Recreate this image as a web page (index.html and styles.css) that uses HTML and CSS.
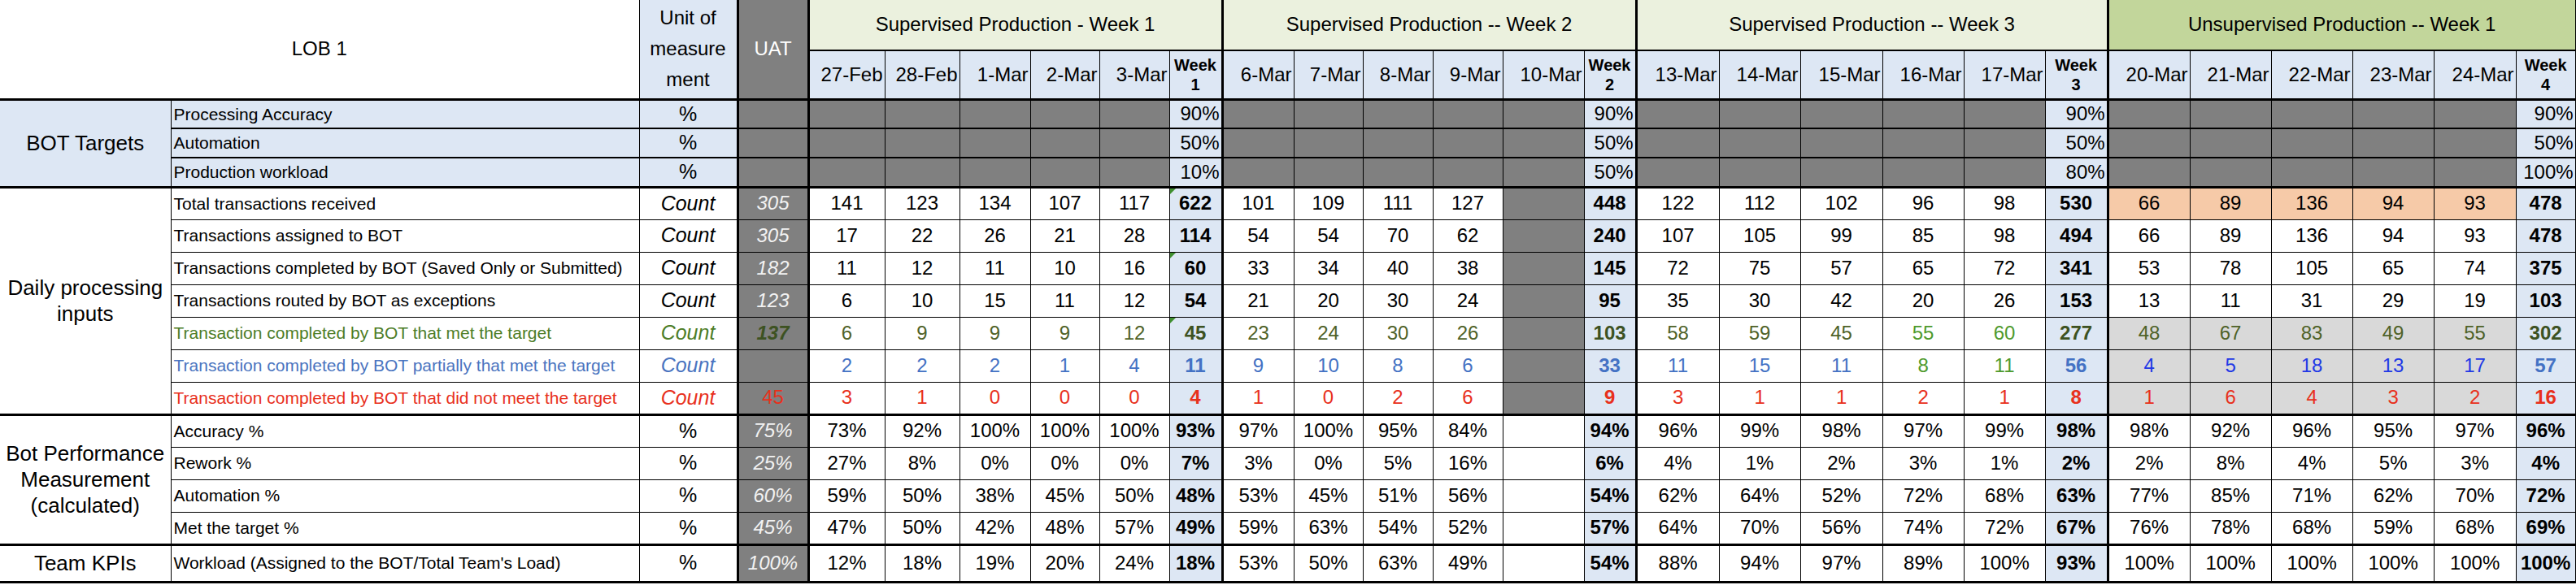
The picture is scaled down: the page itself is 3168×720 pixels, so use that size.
FILE: index.html
```html
<!DOCTYPE html>
<html lang="en">
<head>
<meta charset="utf-8">
<title>LOB 1 – BOT production tracker</title>
<link rel="stylesheet" href="styles.css">
</head>
<body>
<table class="sheet">
<colgroup>
<col style="width:210px"><col style="width:576px"><col style="width:121px"><col style="width:87px">
<col style="width:94px"><col style="width:92px"><col style="width:87px"><col style="width:85px"><col style="width:86px"><col style="width:65px">
<col style="width:88px"><col style="width:85px"><col style="width:86px"><col style="width:86px"><col style="width:100px"><col style="width:64px">
<col style="width:102px"><col style="width:100px"><col style="width:101px"><col style="width:100px"><col style="width:100px"><col style="width:77px">
<col style="width:101px"><col style="width:100px"><col style="width:100px"><col style="width:100px"><col style="width:101px"><col style="width:74px">
</colgroup>
<tbody>
<tr class="hd1">
<td class="lob" colspan="2" rowspan="2">LOB 1</td>
<td class="unit-h" rowspan="2">Unit of<br>measure<br>ment</td>
<td class="uat-h" rowspan="2">UAT</td>
<td class="grp" colspan="6">Supervised Production - Week 1</td>
<td class="grp" colspan="6">Supervised Production -- Week 2</td>
<td class="grp" colspan="6">Supervised Production -- Week 3</td>
<td class="grp unsup" colspan="6">Unsupervised Production -- Week 1</td>
</tr>
<tr class="hd2">
<td class="dh">27-Feb</td><td class="dh">28-Feb</td><td class="dh">1-Mar</td><td class="dh">2-Mar</td><td class="dh">3-Mar</td><td class="wh">Week<br>1</td>
<td class="dh">6-Mar</td><td class="dh">7-Mar</td><td class="dh">8-Mar</td><td class="dh">9-Mar</td><td class="dh">10-Mar</td><td class="wh">Week<br>2</td>
<td class="dh">13-Mar</td><td class="dh">14-Mar</td><td class="dh">15-Mar</td><td class="dh">16-Mar</td><td class="dh">17-Mar</td><td class="wh">Week<br>3</td>
<td class="dh">20-Mar</td><td class="dh">21-Mar</td><td class="dh">22-Mar</td><td class="dh">23-Mar</td><td class="dh">24-Mar</td><td class="wh">Week<br>4</td>
</tr>

<tr class="tg">
<td class="lbl lbl-blue" rowspan="3">BOT Targets</td>
<td class="ds">Processing Accuracy</td><td class="un">%</td><td class="uat"></td>
<td class="g"></td><td class="g"></td><td class="g"></td><td class="g"></td><td class="g"></td><td class="w wt">90%</td>
<td class="g"></td><td class="g"></td><td class="g"></td><td class="g"></td><td class="g"></td><td class="w wt">90%</td>
<td class="g"></td><td class="g"></td><td class="g"></td><td class="g"></td><td class="g"></td><td class="w wt">90%</td>
<td class="g"></td><td class="g"></td><td class="g"></td><td class="g"></td><td class="g"></td><td class="w wt">90%</td>
</tr>
<tr class="tg">
<td class="ds">Automation</td><td class="un">%</td><td class="uat"></td>
<td class="g"></td><td class="g"></td><td class="g"></td><td class="g"></td><td class="g"></td><td class="w wt">50%</td>
<td class="g"></td><td class="g"></td><td class="g"></td><td class="g"></td><td class="g"></td><td class="w wt">50%</td>
<td class="g"></td><td class="g"></td><td class="g"></td><td class="g"></td><td class="g"></td><td class="w wt">50%</td>
<td class="g"></td><td class="g"></td><td class="g"></td><td class="g"></td><td class="g"></td><td class="w wt">50%</td>
</tr>
<tr class="tg last">
<td class="ds">Production workload</td><td class="un">%</td><td class="uat"></td>
<td class="g"></td><td class="g"></td><td class="g"></td><td class="g"></td><td class="g"></td><td class="w wt">10%</td>
<td class="g"></td><td class="g"></td><td class="g"></td><td class="g"></td><td class="g"></td><td class="w wt">50%</td>
<td class="g"></td><td class="g"></td><td class="g"></td><td class="g"></td><td class="g"></td><td class="w wt">80%</td>
<td class="g"></td><td class="g"></td><td class="g"></td><td class="g"></td><td class="g"></td><td class="w wt">100%</td>
</tr>

<tr class="dt">
<td class="lbl" rowspan="7">Daily processing<br>inputs</td>
<td class="ds">Total transactions received</td><td class="un it">Count</td><td class="uat">305</td>
<td>141</td><td>123</td><td>134</td><td>107</td><td>117</td><td class="w tri">622</td>
<td>101</td><td>109</td><td>111</td><td>127</td><td class="g"></td><td class="w">448</td>
<td>122</td><td>112</td><td>102</td><td>96</td><td>98</td><td class="w">530</td>
<td class="or">66</td><td class="or">89</td><td class="or">136</td><td class="or">94</td><td class="or">93</td><td class="w">478</td>
</tr>
<tr class="dt">
<td class="ds">Transactions assigned to BOT</td><td class="un it">Count</td><td class="uat">305</td>
<td>17</td><td>22</td><td>26</td><td>21</td><td>28</td><td class="w">114</td>
<td>54</td><td>54</td><td>70</td><td>62</td><td class="g"></td><td class="w">240</td>
<td>107</td><td>105</td><td>99</td><td>85</td><td>98</td><td class="w">494</td>
<td>66</td><td>89</td><td>136</td><td>94</td><td>93</td><td class="w">478</td>
</tr>
<tr class="dt">
<td class="ds">Transactions completed by BOT (Saved Only or Submitted)</td><td class="un it">Count</td><td class="uat">182</td>
<td>11</td><td>12</td><td>11</td><td>10</td><td>16</td><td class="w tri">60</td>
<td>33</td><td>34</td><td>40</td><td>38</td><td class="g"></td><td class="w">145</td>
<td>72</td><td>75</td><td>57</td><td>65</td><td>72</td><td class="w">341</td>
<td>53</td><td>78</td><td>105</td><td>65</td><td>74</td><td class="w">375</td>
</tr>
<tr class="dt">
<td class="ds">Transactions routed by BOT as exceptions</td><td class="un it">Count</td><td class="uat">123</td>
<td>6</td><td>10</td><td>15</td><td>11</td><td>12</td><td class="w">54</td>
<td>21</td><td>20</td><td>30</td><td>24</td><td class="g"></td><td class="w">95</td>
<td>35</td><td>30</td><td>42</td><td>20</td><td>26</td><td class="w">153</td>
<td>13</td><td>11</td><td>31</td><td>29</td><td>19</td><td class="w">103</td>
</tr>
<tr class="dt met">
<td class="ds">Transaction completed by BOT that met the target</td><td class="un it">Count</td><td class="uat">137</td>
<td>6</td><td>9</td><td>9</td><td>9</td><td>12</td><td class="w tri">45</td>
<td>23</td><td>24</td><td>30</td><td>26</td><td class="g"></td><td class="w">103</td>
<td>58</td><td>59</td><td>45</td><td class="cg2">55</td><td class="cg2">60</td><td class="w">277</td>
<td class="lg">48</td><td class="lg">67</td><td class="lg">83</td><td class="lg">49</td><td class="lg">55</td><td class="w">302</td>
</tr>
<tr class="dt par">
<td class="ds">Transaction completed by BOT partially that met the target</td><td class="un it">Count</td><td class="uat"></td>
<td>2</td><td>2</td><td>2</td><td>1</td><td>4</td><td class="w">11</td>
<td>9</td><td>10</td><td>8</td><td>6</td><td class="g"></td><td class="w">33</td>
<td>11</td><td>15</td><td>11</td><td class="cg2">8</td><td class="cg2">11</td><td class="w">56</td>
<td class="lg cbb">4</td><td class="lg cbb">5</td><td class="lg cbb">18</td><td class="lg cbb">13</td><td class="lg cbb">17</td><td class="w">57</td>
</tr>
<tr class="dt nm last">
<td class="ds">Transaction completed by BOT that did not meet the target</td><td class="un it">Count</td><td class="uat">45</td>
<td>3</td><td>1</td><td>0</td><td>0</td><td>0</td><td class="w">4</td>
<td>1</td><td>0</td><td>2</td><td>6</td><td class="g"></td><td class="w">9</td>
<td>3</td><td>1</td><td>1</td><td>2</td><td>1</td><td class="w">8</td>
<td class="lg">1</td><td class="lg">6</td><td class="lg">4</td><td class="lg">3</td><td class="lg">2</td><td class="w">16</td>
</tr>

<tr class="dt">
<td class="lbl" rowspan="4">Bot Performance<br>Measurement<br>(calculated)</td>
<td class="ds">Accuracy %</td><td class="un">%</td><td class="uat">75%</td>
<td>73%</td><td>92%</td><td>100%</td><td>100%</td><td>100%</td><td class="w">93%</td>
<td>97%</td><td>100%</td><td>95%</td><td>84%</td><td></td><td class="w">94%</td>
<td>96%</td><td>99%</td><td>98%</td><td>97%</td><td>99%</td><td class="w">98%</td>
<td>98%</td><td>92%</td><td>96%</td><td>95%</td><td>97%</td><td class="w">96%</td>
</tr>
<tr class="dt">
<td class="ds">Rework %</td><td class="un">%</td><td class="uat">25%</td>
<td>27%</td><td>8%</td><td>0%</td><td>0%</td><td>0%</td><td class="w">7%</td>
<td>3%</td><td>0%</td><td>5%</td><td>16%</td><td></td><td class="w">6%</td>
<td>4%</td><td>1%</td><td>2%</td><td>3%</td><td>1%</td><td class="w">2%</td>
<td>2%</td><td>8%</td><td>4%</td><td>5%</td><td>3%</td><td class="w">4%</td>
</tr>
<tr class="dt">
<td class="ds">Automation %</td><td class="un">%</td><td class="uat">60%</td>
<td>59%</td><td>50%</td><td>38%</td><td>45%</td><td>50%</td><td class="w">48%</td>
<td>53%</td><td>45%</td><td>51%</td><td>56%</td><td></td><td class="w">54%</td>
<td>62%</td><td>64%</td><td>52%</td><td>72%</td><td>68%</td><td class="w">63%</td>
<td>77%</td><td>85%</td><td>71%</td><td>62%</td><td>70%</td><td class="w">72%</td>
</tr>
<tr class="dt last">
<td class="ds">Met the target %</td><td class="un">%</td><td class="uat">45%</td>
<td>47%</td><td>50%</td><td>42%</td><td>48%</td><td>57%</td><td class="w">49%</td>
<td>59%</td><td>63%</td><td>54%</td><td>52%</td><td></td><td class="w">57%</td>
<td>64%</td><td>70%</td><td>56%</td><td>74%</td><td>72%</td><td class="w">67%</td>
<td>76%</td><td>78%</td><td>68%</td><td>59%</td><td>68%</td><td class="w">69%</td>
</tr>

<tr class="kp last">
<td class="lbl">Team KPIs</td>
<td class="ds">Workload (Assigned to the BOT/Total Team's Load)</td><td class="un">%</td><td class="uat">100%</td>
<td>12%</td><td>18%</td><td>19%</td><td>20%</td><td>24%</td><td class="w">18%</td>
<td>53%</td><td>50%</td><td>63%</td><td>49%</td><td></td><td class="w">54%</td>
<td>88%</td><td>94%</td><td>97%</td><td>89%</td><td>100%</td><td class="w">93%</td>
<td>100%</td><td>100%</td><td>100%</td><td>100%</td><td>100%</td><td class="w">100%</td>
</tr>
</tbody>
</table>
</body>
</html>
```

FILE: styles.css
```css
* { box-sizing: border-box; }

html, body {
  margin: 0;
  padding: 0;
  background: #ffffff;
}

body {
  font-family: "Liberation Sans", Arial, sans-serif;
  color: #000000;
}

.sheet {
  border-collapse: collapse;
  table-layout: fixed;
  width: 3168px;
}

.sheet td {
  border: 1px solid #000000;
  padding: 0 2px;
  text-align: center;
  vertical-align: middle;
  font-size: 24px;
  line-height: 1.1;
  white-space: nowrap;
  overflow: hidden;
}

/* row heights */
.hd1 td { height: 62px; }
.hd2 td { height: 60px; }
.tg td { height: 36px; border-bottom-width: 2px; }
.dt td { height: 40px; }
.kp td { height: 46px; }

/* header */
.hd1 td { border-top: 0; }

.lob {
  background: #ffffff;
  font-size: 24px;
  border-left: 0 !important;
  border-bottom: 3px solid #000000 !important;
}

.unit-h {
  background: #dde7f4;
  font-size: 26px;
  line-height: 38px !important;
  white-space: normal;
  border-bottom: 3px solid #000000 !important;
  border-right: 3px solid #000000 !important;
}

.uat-h {
  background: #808080;
  color: #ffffff;
  font-size: 24px;
  border-left: 3px solid #000000 !important;
  border-right: 3px solid #000000 !important;
  border-bottom: 3px solid #000000 !important;
}

.grp {
  background: #ebf1de;
  font-size: 26px;
  border-bottom: 2px solid #000000 !important;
  border-right: 3px solid #000000 !important;
}

.grp.unsup { background: #c2d69b; }

.dh {
  background: #dde7f4;
  font-size: 22px;
  text-align: right !important;
  padding-right: 2px !important;
  border-bottom: 3px solid #000000 !important;
}

.wh {
  background: #dde7f4;
  font-size: 20px !important;
  font-weight: bold;
  line-height: 1.2 !important;
  border-right: 3px solid #000000 !important;
  border-bottom: 3px solid #000000 !important;
}

/* group labels on the left */
.lbl {
  font-size: 26px !important;
  line-height: 32px !important;
  white-space: normal !important;
  border-left: 0 !important;
  border-bottom: 3px solid #000000 !important;
  background: #ffffff;
}

.lbl-blue { background: #dde7f4; }

.ds {
  text-align: left !important;
  font-size: 21px !important;
  padding-left: 3px !important;
}

.un {
  font-size: 25px !important;
  border-right: 3px solid #000000 !important;
}

.it { font-style: italic; }

.tg .ds,
.tg .un { background: #dde7f4; }

.uat {
  background: #808080;
  color: #f2f2f2;
  font-style: italic;
  border-left: 3px solid #000000 !important;
  border-right: 3px solid #000000 !important;
}

.g { background: #808080; }

.w {
  background: #dde7f4;
  font-weight: bold;
  border-right: 3px solid #000000 !important;
}

.wt {
  font-weight: normal;
  text-align: right !important;
  padding-right: 2px !important;
}

.or { background: #f6caa8; }
.lg { background: #d9d9d9; }

.last td { border-bottom: 3px solid #000000; }

/* coloured rows */
.met td { color: #4f6228; }
.met .ds, .met .un { color: #4d7d27; }
.met .uat { color: #3d5222; font-weight: bold; }
.met .w { color: #3d5222; }

.par td { color: #4472c4; }
.par .ds, .par .un { color: #4a74c0; }

.nm td { color: #e8301c; }
.nm .uat { color: #e8301c; font-style: normal; }

.sheet .cg2 { color: #4e9a2c; }
.sheet .cbb { color: #2138e6; }

/* Excel error indicator triangles */
.tri { position: relative; }
.tri::before {
  content: "";
  position: absolute;
  left: 0;
  top: 0;
  border-top: 7px solid #3f8f2f;
  border-right: 7px solid transparent;
}
```
